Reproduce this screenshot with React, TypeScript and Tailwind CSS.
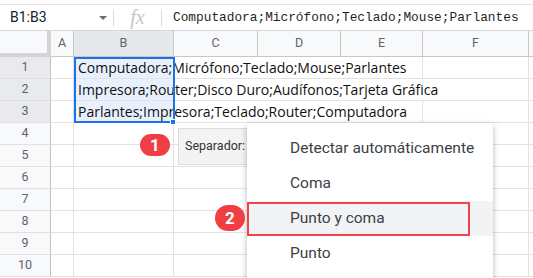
// Hoja de cálculo: dividir texto en columnas — menú "Separador" abierto.
import React from 'react';

const COLS = [
  { key: 'A', w: 'w-[23px]' },
  { key: 'B', w: 'w-[100px]' },
  { key: 'C', w: 'w-[84px]' },
  { key: 'D', w: 'w-[83px]' },
  { key: 'E', w: 'w-[82px]' },
  { key: 'F', w: 'w-[106px]' },
  { key: '', w: 'w-[30px]' },
];

// texto que desborda desde B; span = última columna cubierta (índice en COLS)
const ROWS: Record<number, { text: string; span: number }> = {
  1: { text: 'Computadora;Micrófono;Teclado;Mouse;Parlantes', span: 4 },
  2: { text: 'Impresora;Router;Disco Duro;Audífonos;Tarjeta Gráfica', span: 5 },
  3: { text: 'Parlantes;Impresora;Teclado;Router;Computadora', span: 4 },
};

const MENU = ['Detectar automáticamente', 'Coma', 'Punto y coma', 'Punto'];

function Badge({ n, className }: { n: number; className: string }) {
  return (
    <div
      className={`absolute flex items-center justify-center rounded-full bg-[#ef3e44] text-white font-bold text-[17px] leading-none ${className}`}
    >
      {n}
    </div>
  );
}

export default function App() {
  return (
    <div className="relative w-[533px] h-[278px] overflow-hidden bg-white font-['Roboto',sans-serif]">
      {/* barra de fórmulas */}
      <div className="h-[5px] border-b border-[#e3e3e3]" />
      <div className="flex items-center h-[26px] border-b border-[#d6d6d6]">
        <div className="flex items-center w-[113px] pl-[10px] pr-[5px]">
          <span className="flex-1 text-[14px] text-[#202124]">B1:B3</span>
          <span className="w-0 h-0 border-l-[4px] border-r-[4px] border-t-[4px] border-l-transparent border-r-transparent border-t-[#6b6b6b] mr-[1px]" />
        </div>
        <div className="w-px h-[18px] bg-[#dadce0]" />
        <div className="w-[47px] flex justify-center">
          <span className="font-['Liberation_Serif',serif] italic text-[20px] leading-none text-[#c4c4c4] -mt-[2px]">fx</span>
        </div>
        <div className="w-px h-[18px] bg-[#dadce0]" />
        <span className="pl-[11px] font-['Liberation_Mono',monospace] text-[12.8px] text-[#1f1f1f] whitespace-nowrap">
          Computadora;Micrófono;Teclado;Mouse;Parlantes
        </span>
      </div>

      {/* encabezados de columna */}
      <div className="flex h-[26px]">
        <div className="w-[51px] shrink-0 bg-[#f8f9fa] border-r-4 border-b-4 border-[#d4d4d4]" />
        {COLS.map((c, ci) => (
          <div
            key={ci}
            className={`${c.w} shrink-0 flex items-center justify-center text-[12.5px] text-[#5f6368] border-r border-b border-[#c7c7c7] ${
              c.key === 'B' ? 'bg-[#e6e8eb]' : 'bg-[#f8f9fa]'
            }`}
          >
            {c.key}
          </div>
        ))}
      </div>

      {/* filas */}
      {Array.from({ length: 10 }, (_, i) => i + 1).map((r) => {
        const row = ROWS[r];
        const sel = r <= 3;
        return (
          <div key={r} className="flex h-[22px]">
            <div
              className={`w-[51px] shrink-0 flex items-center justify-center text-[12.5px] text-[#5f6368] border-r border-b border-r-[#c2c2c2] border-b-[#e0e0e0] ${
                sel ? 'bg-[#e8eaed]' : 'bg-[#f8f9fa]'
              }`}
            >
              {r}
            </div>
            {COLS.map((c, ci) => {
              const inside = row && ci >= 1 && ci < row.span;
              return (
                <div
                  key={ci}
                  className={`${c.w} shrink-0 border-b border-[#e2e2e2] ${inside ? '' : 'border-r'} ${
                    sel && c.key === 'B' ? 'bg-[#e8f0fe]' : ''
                  }`}
                >
                  {row && c.key === 'B' && (
                    <span className="block pl-[4px] pt-[1px] whitespace-nowrap font-['Open_Sans',sans-serif] text-[14px] leading-[20px] text-[#111]">
                      {row.text}
                    </span>
                  )}
                </div>
              );
            })}
          </div>
        );
      })}

      {/* selección B1:B3 */}
      <div className="absolute left-[74px] top-[57px] w-[101px] h-[66px] border-2 border-[#1a73e8] pointer-events-none" />
      <div className="absolute left-[170px] top-[119px] w-[6px] h-[6px] bg-[#1a73e8] border border-white" />

      {/* caja Separador */}
      <div className="absolute left-[178px] top-[128px] w-[80px] h-[37px] bg-[#f3f3f3] border border-[#dcdcdc] flex items-center pl-[6px] text-[12.5px] text-[#333]">
        Separador:
      </div>

      {/* menú desplegable */}
      <div className="absolute left-[247px] top-[123px] w-[246px] h-[170px] bg-white rounded-[4px] shadow-[0_2px_6px_rgba(0,0,0,0.28)] pt-[8px]">
        {MENU.map((m) => (
          <div
            key={m}
            className={`h-[35px] flex items-center pl-[43px] text-[15.5px] text-[#3c4043] ${
              m === 'Punto y coma' ? 'bg-[#f1f3f4]' : ''
            }`}
          >
            {m}
          </div>
        ))}
      </div>
      <div className="absolute left-[247px] top-[202px] w-[223px] h-[34px] border-[2.5px] border-[#f0434a]" />

      <Badge n={1} className="left-[140px] top-[134px] w-[30px] h-[22px]" />
      <Badge n={2} className="left-[215px] top-[205px] w-[30px] h-[26px]" />
    </div>
  );
}
